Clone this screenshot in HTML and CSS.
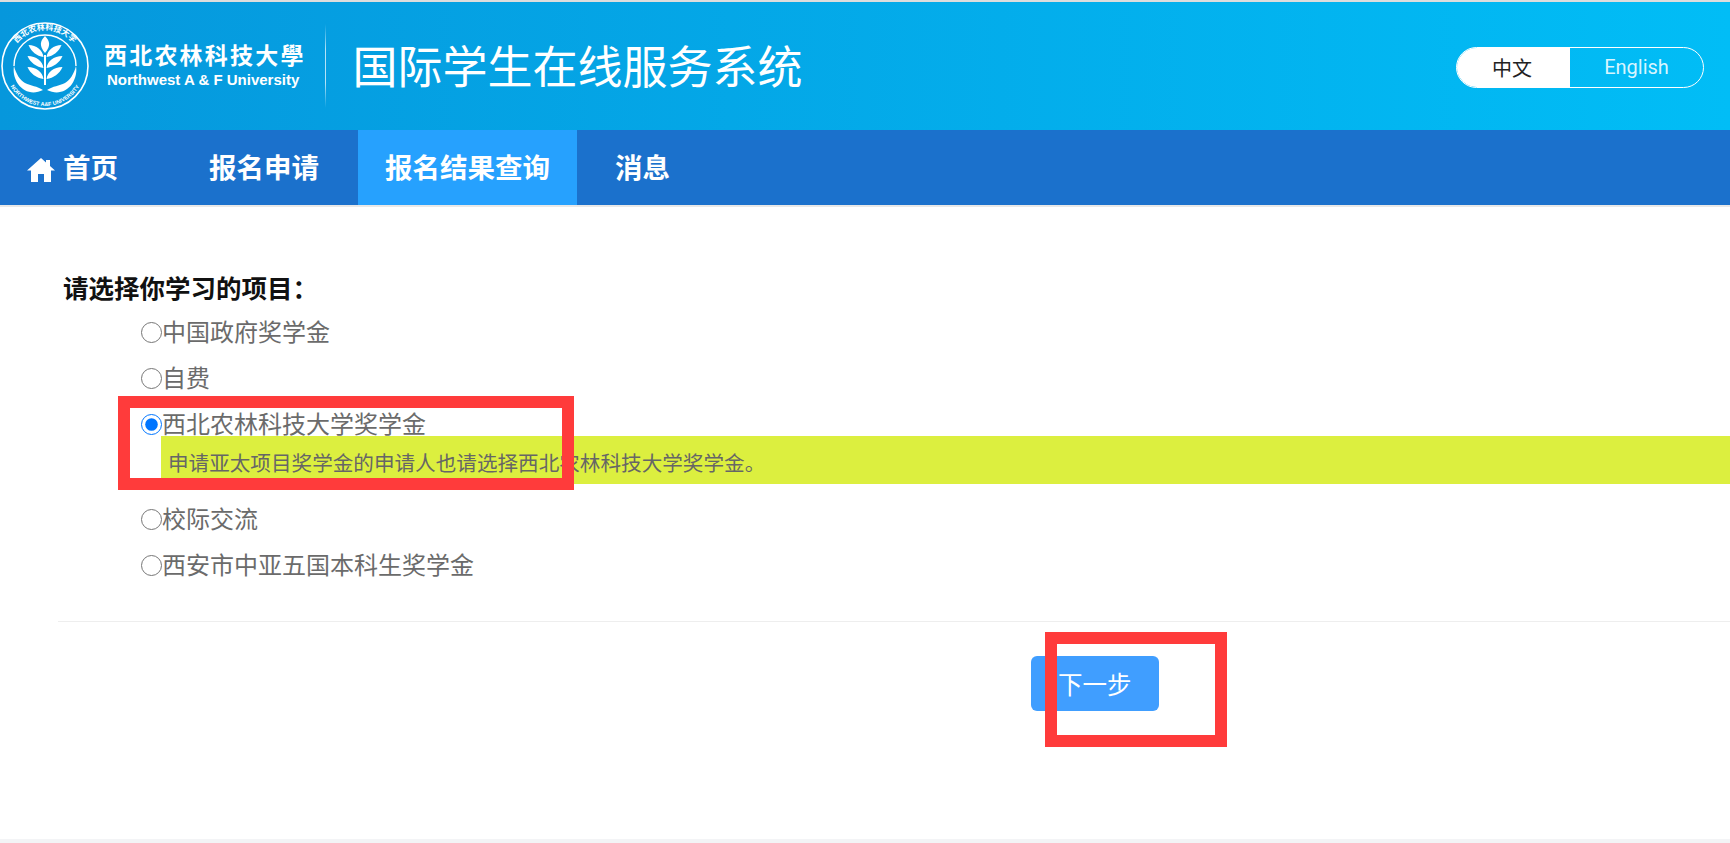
FILE: index.html
```html
<!DOCTYPE html>
<html lang="zh-CN">
<head>
<meta charset="UTF-8">
<meta name="viewport" content="width=device-width, initial-scale=1.0">
<title>国际学生在线服务系统</title>
<link rel="stylesheet" href="styles.css">
</head>
<body>
<header class="header">
    <div class="brand">
        <svg class="seal" width="90" height="94" viewBox="0 0 90 94">
            <defs>
                <path id="sealTop" d="M9 47a36 36 0 0 1 72 0"/>
                <path id="sealBottom" d="M5 47a40 40 0 0 0 80 0"/>
            </defs>
            <circle cx="45" cy="47" r="43" fill="none" stroke="#fff" stroke-width="1.6"/>
            <text class="seal-top"><textPath href="#sealTop" startOffset="50%" text-anchor="middle">西北农林科技大学</textPath></text>
            <text class="seal-bottom"><textPath href="#sealBottom" startOffset="50%" text-anchor="middle">NORTHWEST A&amp;F UNIVERSITY</textPath></text>
            <path d="M14 47a31 31 0 0 1 62 0" fill="none" stroke="#fff" stroke-width="1.400"/>
            <g fill="#fff">
                <path d="M45 17c5 5 6 10 0 17c-6-7-5-12 0-17z"/>
                <path d="M43.500 38c-7-1-12-5-15-12c8 0 14 5 15 12z"/>
                <path d="M46.500 38c7-1 12-5 15-12c-8 0-14 5-15 12z"/>
                <path d="M43.500 49c-7-1-13-5-16-12c9 0 15 5 16 12z"/>
                <path d="M46.500 49c7-1 13-5 16-12c-9 0-15 5-16 12z"/>
                <path d="M43.500 60c-7-1-13-5-16-12c9 0 15 5 16 12z"/>
                <path d="M46.500 60c7-1 13-5 16-12c-9 0-15 5-16 12z"/>
                <path d="M44 36h2v30h-2z"/>
                <path d="M43 71c-10 5-19 2-25-6c-4-6-5-13-4-18c2 8 6 14 11 17c6 3 12 3 18 7z"/>
                <path d="M47 71c10 5 19 2 25-6c4-6 5-13 4-18c-2 8-6 14-11 17c-6 3-12 3-18 7z"/>
            </g>
        </svg>
        <div class="school">
            <div class="school-cn">西北农林科技大學</div>
            <div class="school-en">Northwest A &amp; F University</div>
        </div>
        <div class="brand-line"></div>
        <div class="system-name">国际学生在线服务系统</div>
    </div>
    <div class="lang">
        <span class="lang-item lang-on">中文</span>
        <span class="lang-item">English</span>
    </div>
</header>

<nav class="nav">
    <a class="nav-item nav-home">
        <svg width="28" height="25" viewBox="0 0 28 25"><path fill="#fff" d="M14 1L0 13.500h4V25h7v-8h6v8h7V13.500h4l-5-4.500V3h-4v2.500z"/></svg>
        首页
    </a>
    <a class="nav-item nav-apply">报名申请</a>
    <a class="nav-item nav-active">报名结果查询</a>
    <a class="nav-item nav-msg">消息</a>
</nav>

<main class="content">
    <h3 class="question">请选择你学习的项目：</h3>
    <div class="options">
        <label class="option"><input type="radio" name="project">中国政府奖学金</label>
        <label class="option"><input type="radio" name="project">自费</label>
        <label class="option option-picked"><input type="radio" name="project" checked>西北农林科技大学奖学金</label>
        <div class="note">申请亚太项目奖学金的申请人也请选择西北农林科技大学奖学金<span class="stop">。</span></div>
        <label class="option"><input type="radio" name="project">校际交流</label>
        <label class="option"><input type="radio" name="project">西安市中亚五国本科生奖学金</label>
    </div>
    <div class="actions">
        <button class="next">下一步</button>
    </div>
    <div class="mark mark-note"></div>
    <div class="mark mark-next"></div>
</main>

<footer class="footer"></footer>
</body>
</html>
```
FILE: styles.css
```css
* {
    box-sizing: border-box;
}

html, body {
    height: 100%;
}

body {
    display: flex;
    flex-direction: column;
    margin: 0;
    overflow: hidden;
    background-color: #fff;
    border-top: 2px solid #ddd;
    font-family: "Liberation Sans", "Noto Sans CJK SC", sans-serif;
}

.header {
    display: flex;
    justify-content: space-between;
    align-items: center;
    height: 128px;
    padding-right: 26px;
    background: linear-gradient(90deg, #0697dc, #01bdf6);
    color: #fff;
}

.brand {
    display: flex;
    align-items: center;
}

.seal {
    display: block;
    margin-right: 14px;
}

.seal-top {
    fill: #fff;
    font-size: 8px;
    font-weight: 700;
}

.seal-bottom {
    fill: #fff;
    font-size: 5.500px;
    font-weight: 700;
}

.school-cn {
    font-size: 23px;
    font-weight: 700;
    letter-spacing: 2.200px;
    line-height: 28px;
}

.school-en {
    margin-left: 3px;
    font-size: 15px;
    font-weight: 700;
    line-height: 20px;
}

.brand-line {
    width: 1px;
    height: 84px;
    margin: 0 27px 0 19px;
    background: linear-gradient(180deg, rgba(255, 255, 255, 0), rgba(255, 255, 255, 0.7) 30%, rgba(255, 255, 255, 0.7) 70%, rgba(255, 255, 255, 0));
}

.system-name {
    padding-top: 6px;
    font-size: 45px;
    line-height: 56px;
}

.lang {
    display: flex;
    width: 248px;
    height: 41px;
    margin-top: 2px;
    overflow: hidden;
    border: 1.500px solid #fff;
    border-radius: 21px;
    font-size: 20px;
}

.lang-item {
    display: flex;
    flex: 1;
    justify-content: center;
    align-items: center;
    color: #d8f5ff;
    font-family: Roboto, sans-serif;
}

.lang-on {
    flex: 0 0 113px;
    padding-right: 3px;
    background-color: #fff;
    color: #222;
    font-family: "Noto Sans CJK SC", sans-serif;
}

.nav {
    display: flex;
    height: 75px;
    background-color: #1b71cc;
    color: #fff;
    font-size: 27.500px;
    font-weight: 700;
    line-height: 72px;
}

.nav-item {
    display: block;
    padding-top: 3px;
    white-space: nowrap;
}

.nav-home {
    display: flex;
    align-items: center;
    gap: 8px;
    width: 182px;
    padding-left: 27px;
}

.nav-apply {
    width: 176px;
    padding-left: 27px;
}

.nav-active {
    padding-right: 27px;
    padding-left: 27px;
    background-color: #26a1fe;
}

.nav-msg {
    padding-left: 38px;
}

.content {
    position: relative;
    flex: 1;
    border-top: 2px solid #e8e8e8;
    padding: 62px 0 0 58px;
}

.question {
    margin: 0 0 0 5px;
    color: #111;
    font-size: 25.500px;
    font-weight: 700;
    line-height: 40px;
}

.options {
    margin-top: -2px;
    padding: 0 0 35px 83px;
    border-bottom: 1px solid #eee;
}

.option {
    display: flex;
    align-items: center;
    height: 46px;
    color: #6b6b6b;
    font-size: 24px;
}

.option input {
    width: 21px;
    height: 21px;
    margin: 4px 0 0 0;
}

.note {
    height: 48px;
    margin: -9px 0 10px 20px;
    padding-left: 7px;
    background-color: #dcef3f;
    color: #666;
    font-size: 20.600px;
    line-height: 52px;
}

.stop {
    font-family: "Noto Sans CJK TC", sans-serif;
}

.actions {
    padding: 34px 0 0 973px;
}

.next {
    display: block;
    width: 128px;
    height: 55px;
    padding: 0 0 0 27px;
    border: none;
    border-radius: 6px;
    background-color: #409eff;
    color: #fff;
    font-family: inherit;
    font-size: 24.500px;
    text-align: left;
}

.mark {
    position: absolute;
    border: 12px solid #ff3b3b;
}

.mark-note {
    top: 189px;
    left: 118px;
    width: 456px;
    height: 94px;
}

.mark-next {
    top: 425px;
    left: 1045px;
    width: 182px;
    height: 115px;
}

.footer {
    height: 4px;
    background-color: #f3f4f6;
}
```
